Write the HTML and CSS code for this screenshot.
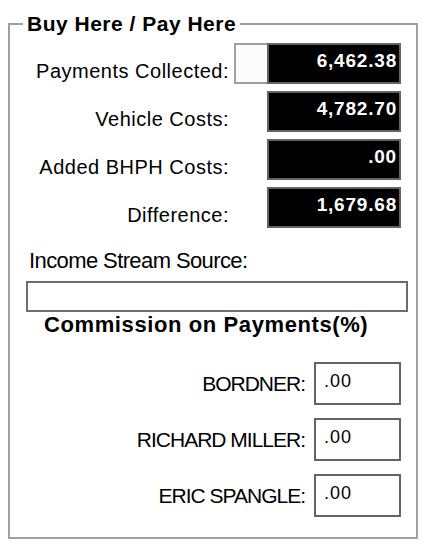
FILE: index.html
```html
<!DOCTYPE html>
<html lang="en">
<head>
  <meta charset="UTF-8">
  <title>Buy Here / Pay Here</title>
  <link rel="stylesheet" href="styles.css">
</head>
<body>

  <fieldset class="bhph">
    <legend>Buy Here / Pay Here</legend>

    <div class="totals">
      <div class="total-label">Payments Collected:</div>
      <div class="spacer-box"></div>
      <div class="total-value">6,462.38</div>

      <div class="total-label">Vehicle Costs:</div>
      <div class="total-value">4,782.70</div>

      <div class="total-label">Added BHPH Costs:</div>
      <div class="total-value">.00</div>

      <div class="total-label">Difference:</div>
      <div class="total-value">1,679.68</div>
    </div>

    <div class="income">
      <label for="income-source">Income Stream Source:</label>
      <div class="income-box" id="income-source"></div>
    </div>

    <div class="commission-title">Commission on Payments(%)</div>

    <div class="commission-list">
      <div class="commission-row">
        <span class="rep-name">BORDNER:</span>
        <div class="rep-value">.00</div>
      </div>
      <div class="commission-row">
        <span class="rep-name">RICHARD MILLER:</span>
        <div class="rep-value">.00</div>
      </div>
      <div class="commission-row">
        <span class="rep-name">ERIC SPANGLE:</span>
        <div class="rep-value">.00</div>
      </div>
    </div>
  </fieldset>

</body>
</html>
```

FILE: styles.css
```css
body {
  margin: 0;
  background: #ffffff;
  color: #000000;
  font-family: 'Liberation Sans', Arial, sans-serif;
}

.bhph {
  box-sizing: border-box;
  width: 410px;
  min-width: 0;
  margin: 11px 0 0 8px;
  padding: 0 15px 20px 0;
  border: 2px solid #a0a0a0;
}

.bhph legend {
  margin-left: 13px;
  padding: 0 4px;
  font-size: 21px;
  font-weight: bold;
  letter-spacing: 0.5px;
  line-height: 26px;
}

.totals {
  display: grid;
  grid-template-columns: 1fr 33px 134px;
  grid-auto-rows: 41px;
  row-gap: 7px;
  margin-top: 6px;
}

.total-label {
  grid-column: 1;
  align-self: end;
  text-align: right;
  padding: 0 5px 1px 0;
  font-size: 20px;
  letter-spacing: 0.5px;
  line-height: 24px;
  white-space: nowrap;
}

.spacer-box {
  grid-column: 2;
  background: #fcfcfc;
  border: 2px solid #a0a0a0;
  border-right: none;
}

.total-value {
  grid-column: 3;
  box-sizing: border-box;
  background: #000000;
  color: #ffffff;
  border: 2px solid #646464;
  padding: 5px 2px 0 0;
  text-align: right;
  font-size: 19px;
  font-weight: bold;
  letter-spacing: 0.8px;
  line-height: 22px;
}

.income {
  margin: 20px 0 0 16px;
  width: 382px;
}

.income label {
  display: block;
  padding-left: 3px;
  font-size: 22px;
  letter-spacing: -0.6px;
  line-height: 26px;
}

.income-box {
  box-sizing: border-box;
  height: 31px;
  margin-top: 7px;
  background: #ffffff;
  border: 2px solid #6e6e6e;
}

.commission-title {
  margin-left: 34px;
  font-size: 22px;
  font-weight: bold;
  letter-spacing: 0.6px;
  line-height: 26px;
}

.commission-list {
  display: flex;
  flex-direction: column;
  gap: 13px;
  margin-top: 24px;
}

.commission-row {
  display: flex;
  justify-content: flex-end;
  align-items: center;
  gap: 9px;
}

.rep-name {
  font-size: 21px;
  letter-spacing: -1px;
  line-height: 24px;
}

.rep-value {
  box-sizing: border-box;
  width: 87px;
  height: 43px;
  padding: 6px 6px 0 8px;
  border: 2px solid #646464;
  background: #ffffff;
  font-size: 18px;
  letter-spacing: 1px;
  line-height: 22px;
}
```
